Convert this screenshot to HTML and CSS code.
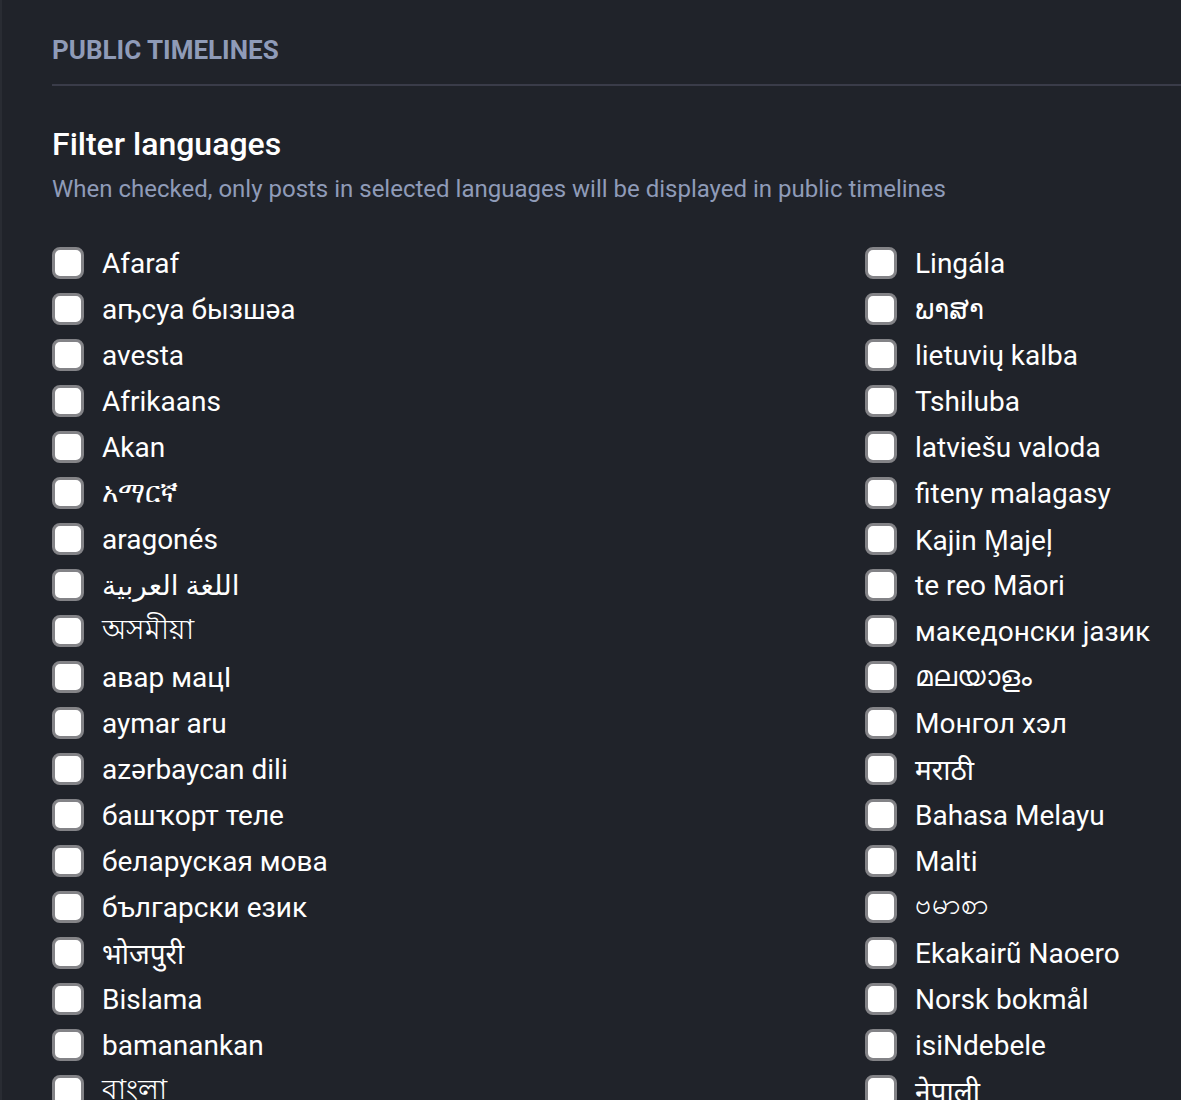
FILE: index.html
```html
<!DOCTYPE html>
<html lang="en">
<head>
    <meta charset="UTF-8">
    <meta name="viewport" content="width=device-width, initial-scale=1.0">
    <title>Public timelines</title>
    <link rel="stylesheet" href="styles.css">
</head>
<body>
    <div class="page">
        <h2 class="section-title">Public timelines</h2>
        <div class="setting">
            <h3>Filter languages</h3>
            <p class="hint">When checked, only posts in selected languages will be displayed in public timelines</p>
            <div class="lang-list">
                <div class="lang-col">
                    <label class="lang"><input type="checkbox"><span>Afaraf</span></label>
                    <label class="lang"><input type="checkbox"><span>аҧсуа бызшәа</span></label>
                    <label class="lang"><input type="checkbox"><span>avesta</span></label>
                    <label class="lang"><input type="checkbox"><span>Afrikaans</span></label>
                    <label class="lang"><input type="checkbox"><span>Akan</span></label>
                    <label class="lang"><input type="checkbox"><span>አማርኛ</span></label>
                    <label class="lang"><input type="checkbox"><span>aragonés</span></label>
                    <label class="lang"><input type="checkbox"><span>اللغة العربية</span></label>
                    <label class="lang"><input type="checkbox"><span>অসমীয়া</span></label>
                    <label class="lang"><input type="checkbox"><span>авар мацӀ</span></label>
                    <label class="lang"><input type="checkbox"><span>aymar aru</span></label>
                    <label class="lang"><input type="checkbox"><span>azərbaycan dili</span></label>
                    <label class="lang"><input type="checkbox"><span>башҡорт теле</span></label>
                    <label class="lang"><input type="checkbox"><span>беларуская мова</span></label>
                    <label class="lang"><input type="checkbox"><span>български език</span></label>
                    <label class="lang"><input type="checkbox"><span>भोजपुरी</span></label>
                    <label class="lang"><input type="checkbox"><span>Bislama</span></label>
                    <label class="lang"><input type="checkbox"><span>bamanankan</span></label>
                    <label class="lang"><input type="checkbox"><span>বাংলা</span></label>
                </div>
                <div class="lang-col">
                    <label class="lang"><input type="checkbox"><span>Lingála</span></label>
                    <label class="lang"><input type="checkbox"><span>ພາສາ</span></label>
                    <label class="lang"><input type="checkbox"><span>lietuvių kalba</span></label>
                    <label class="lang"><input type="checkbox"><span>Tshiluba</span></label>
                    <label class="lang"><input type="checkbox"><span>latviešu valoda</span></label>
                    <label class="lang"><input type="checkbox"><span>fiteny malagasy</span></label>
                    <label class="lang"><input type="checkbox"><span>Kajin M̧ajeļ</span></label>
                    <label class="lang"><input type="checkbox"><span>te reo Māori</span></label>
                    <label class="lang"><input type="checkbox"><span>македонски јазик</span></label>
                    <label class="lang"><input type="checkbox"><span>മലയാളം</span></label>
                    <label class="lang"><input type="checkbox"><span>Монгол хэл</span></label>
                    <label class="lang"><input type="checkbox"><span>मराठी</span></label>
                    <label class="lang"><input type="checkbox"><span>Bahasa Melayu</span></label>
                    <label class="lang"><input type="checkbox"><span>Malti</span></label>
                    <label class="lang"><input type="checkbox"><span>ဗမာစာ</span></label>
                    <label class="lang"><input type="checkbox"><span>Ekakairũ Naoero</span></label>
                    <label class="lang"><input type="checkbox"><span>Norsk bokmål</span></label>
                    <label class="lang"><input type="checkbox"><span>isiNdebele</span></label>
                    <label class="lang"><input type="checkbox"><span>नेपाली</span></label>
                </div>
            </div>
        </div>
    </div>
</body>
</html>
```

FILE: styles.css
```css
html, body {
    margin: 0;
    height: 100%;
    overflow: hidden;
}
body {
    background-color: #20232a;
    font-family: Roboto, "Noto Sans", "DejaVu Sans", sans-serif;
    color: #ffffff;
    border-left: 2px solid #292c33;
}
.page {
    padding: 33px 0 0 50px;
    width: 1700px;
}
.section-title {
    margin: 0;
    padding-bottom: 17px;
    border-bottom: 2px solid #3a3c49;
    font-size: 26px;
    font-weight: 700;
    line-height: 34px;
    text-transform: uppercase;
    color: #8f9bb8;
}
.setting h3 {
    margin: 38px 0 0;
    font-size: 32px;
    font-weight: 500;
    line-height: 40px;
}
.hint {
    margin: 10px 0 0;
    font-size: 24px;
    line-height: 30px;
    color: #8f9bb8;
}
.lang-list {
    display: grid;
    grid-template-columns: 813px 813px;
    margin-top: 36px;
}
.lang-col {
    display: flex;
    flex-direction: column;
}
.lang {
    display: flex;
    align-items: center;
    gap: 18px;
    height: 46px;
    font-size: 28px;
}
.lang input {
    appearance: none;
    -webkit-appearance: none;
    margin: 0;
    width: 32px;
    height: 32px;
    flex: none;
    background-color: #ffffff;
    border: 3px solid #838387;
    border-radius: 8px;
}
```
